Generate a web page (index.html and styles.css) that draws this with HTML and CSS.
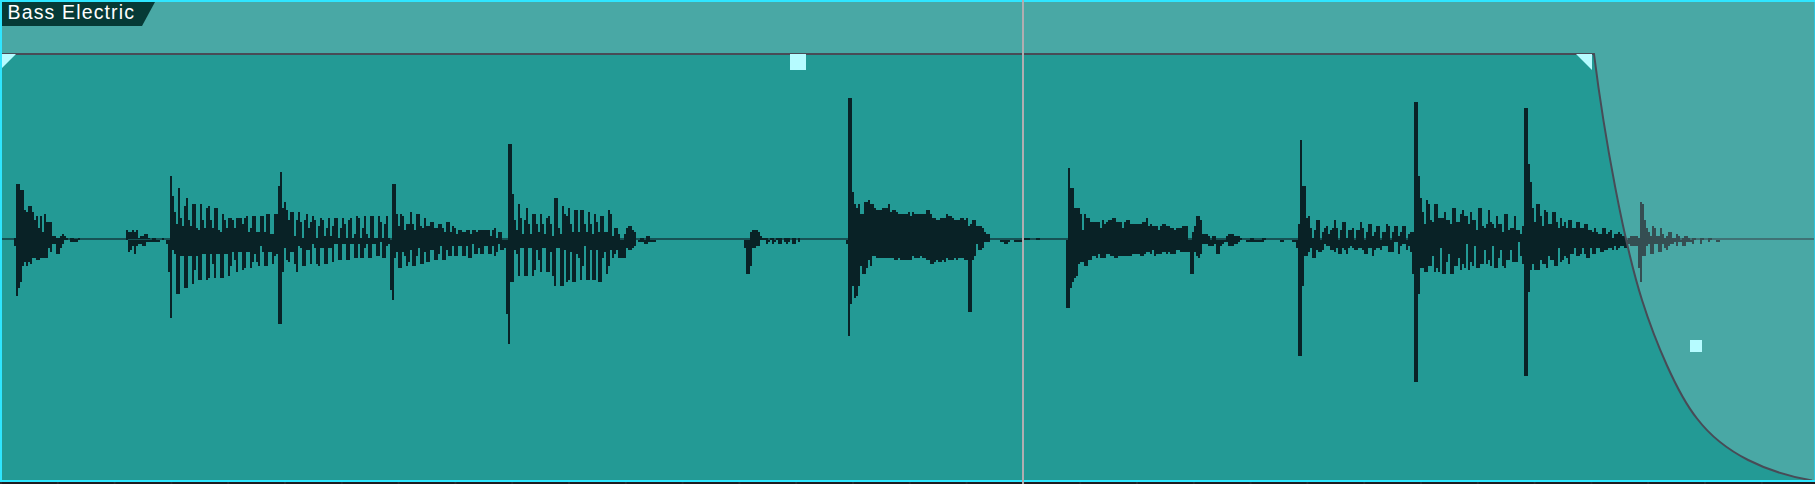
FILE: index.html
```html
<!DOCTYPE html>
<html lang="en">
<head>
<meta charset="utf-8">
<title>Bass Electric</title>
<link rel="stylesheet" href="styles.css">
</head>
<body>
<main class="track">
<section class="clip">
<svg class="clip-canvas" viewBox="0 0 1815 484" width="1815" height="484" aria-label="Waveform">
  <rect class="body" width="1815" height="484"/>
  <rect class="zero" x="2" y="238" width="1812" height="2"/>
  <g class="wave">
    <g transform="translate(0 160) scale(.333333)">
      <path d="M48 237V72H60V90H72V150H78V156H84V138H96V156H102V180H108V168H114V204H120V168H126V216H132V162H138V186H156V228H168V234H180V228H186V222H192V228H198V234H204V237ZM210 237V234H222V237ZM234 240V234H240V240Z"/>
      <path d="M42 234V258H48V408H54V384H60V366H66V318H72V306H78V318H84V306H90V312H96V294H108V300H120V294H144V264H150V276H156V252H168V282H180V264H186V252H192V240H204V234ZM210 237V246H234V237Z"/>
      <path d="M378 240V210H384V216H396V210H402V216H408V210H414V234H420V228H432V222H444V234H450V240ZM456 240V234H468V240ZM486 240V234H492V240ZM384 237V276H390V270H396V258H402V282H408V258H414V252H426V258H438V246H480V240H450V237Z"/>
      <path d="M510 237V48H516V108H522V156H528V192H534V84H540V174H546V198H552V138H558V114H564V180H570V198H576V132H588V204H594V210H600V132H606V180H612V204H618V144H624V138H630V180H636V204H642V144H654V210H660V216H666V162H672V180H678V204H684V174H696V180H702V204H708V174H726V192H732V174H738V168H744V216H750V237Z"/>
      <path d="M498 240V252H504V336H510V474H516V270H522V282H528V402H540V288H552V384H564V288H576V372H582V330H588V288H594V360H606V282H618V360H624V354H630V282H636V312H642V354H648V282H660V354H672V282H684V348H690V318H696V276H702V300H708V336H714V276H726V330H732V324H738V276H750V234H510V240Z"/>
    </g>
    <g transform="translate(250 160) scale(.333333)">
      <path d="M0 240V204H6V168H18V216H30V168H42V216H48V162H60V222H72V162H84V78H90V36H96V144H102V126H108V150H114V180H120V156H132V228H138V180H144V156H150V186H156V234H162V180H168V162H174V204H180V186H186V168H192V180H198V234H204V198H210V174H216V180H222V228H228V204H234V174H240V228H246V198H252V174H264V234H270V204H276V174H282V192H288V234H294V180H300V174H306V234H312V222H318V168H324V174H330V234H336V204H342V168H348V222H354V234H360V168H372V234H384V168H390V186H396V234H402V192H408V168H414V234H420V240H426V72H438V162H444V198H450V162H456V168H462V210H468V192H480V156H486V192H492V210H498V162H510V198H516V204H522V174H528V198H540V186H552V204H564V192H570V240Z"/>
      <path d="M0 240V324H6V306H12V282H18V306H24V318H30V258H36V276H42V318H54V276H66V312H72V288H78V282H84V492H96V336H102V264H108V300H114V306H120V276H132V312H138V336H144V258H150V264H156V318H168V270H180V312H186V252H192V264H198V312H204V318H210V264H222V312H234V264H246V306H252V252H264V300H276V252H288V300H300V252H312V294H324V252H330V294H342V264H348V252H354V294H366V252H378V288H390V246H396V294H408V258H414V252H420V390H426V420H432V294H438V276H444V324H456V276H462V288H468V318H474V306H480V270H486V318H498V288H504V264H510V312H522V276H528V306H540V270H552V300H564V282H570V240Z"/>
    </g>
    <g transform="translate(440 130) scale(.333333)">
      <path d="M0 330V282H6V294H12V306H18V276H30V306H36V288H42V294H48V312H54V300H66V306H78V300H90V312H96V300H108V306H114V300H150V318H156V300H162V294H168V324H174V306H186V330H204V42H216V192H222V270H228V300H234V222H240V264H246V312H252V270H258V234H264V282H270V312H276V252H288V282H294V306H300V252H306V282H312V312H318V264H324V258H330V282H336V318H342V204H354V294H360V312H366V228H372V252H378V258H384V234H390V282H396V306H402V240H414V306H420V240H432V282H438V306H444V246H450V282H456V312H462V252H468V276H474V306H480V258H492V306H504V240H510V252H516V318H522V294H534V312H540V330H552V312H558V294H564V288H576V300H582V306H588V330ZM600 330V324H612V330ZM618 330V318H630V330Z"/>
      <path d="M0 330V348H6V390H18V360H24V378H36V348H42V378H54V348H66V378H78V348H84V384H96V342H102V372H114V354H120V372H132V348H144V372H156V348H162V378H168V366H174V342H180V360H192V354H198V552H204V642H210V456H222V360H228V372H234V438H240V354H252V438H264V354H276V438H282V420H288V360H294V390H300V426H306V354H318V426H330V366H336V438H342V468H348V354H360V468H372V360H378V456H384V450H390V366H396V456H408V372H414V384H420V450H426V408H432V348H438V450H450V360H456V450H468V360H474V456H486V384H492V366H498V432H504V408H510V360H516V384H522V372H528V360H534V384H558V354H564V360H576V354H582V348H588V330ZM594 330V336H612V342H624V336H648V330Z"/>
    </g>
    <g transform="translate(730 80) scale(.333333)">
      <path d="M60 480V456H66V450H84V456H90V468H96V474H114V480H120V474H132V480H138V474H156V480H162V474H180V480H186V474H198V480H204V474H210V486H204V480H198V492H186V480H180V486H174V492H168V486H162V480H156V492H144V480H138V486H132V492H126V480H120V486H114V492H108V480H90V498H78V504H66V558H60V582H48V504H42V480Z"/>
      <path d="M354 480V54H366V336H372V372H378V384H384V372H390V402H402V366H414V360H420V372H432V384H438V390H456V384H474V372H480V396H486V390H498V396H504V402H534V396H540V408H546V396H552V402H588V390H600V402H606V414H618V420H630V414H648V402H654V408H666V414H672V420H690V414H702V420H708V414H714V438H720V432H726V420H738V438H756V444H762V456H768V462H780V480Z"/>
      <path d="M348 480V492H354V768H360V672H366V618H372V654H378V648H384V618H390V558H396V582H408V564H414V540H420V558H426V528H438V534H492V540H504V534H510V540H546V528H552V534H570V528H576V534H588V540H600V552H612V546H618V540H624V546H636V540H642V546H648V534H654V540H672V534H678V540H684V534H702V540H714V696H726V540H732V528H738V492H744V510H756V504H762V486H780V480ZM810 480V486H822V492H834V486H840V480Z"/>
    </g>
    <g transform="translate(1010 150) scale(.333333)">
      <path d="M12 270V276H36V270ZM42 270V264H60V270ZM78 270V264H90V270ZM708 270V276H762V270H768V264H756V270H732V264H720V270ZM810 270V276H822V270Z"/>
      <path d="M174 270V54H180V114H192V174H210V192H216V240H222V192H228V204H240V216H270V234H276V210H282V222H288V216H294V210H306V204H318V216H336V234H342V216H348V210H360V222H396V216H408V204H414V228H420V222H426V228H444V240H450V228H456V222H468V228H480V234H492V240H498V234H516V228H534V270H546V246H552V228H558V198H570V210H576V252H594V258H600V270H606V258H618V270H648V258H654V252H672V258H690V264H696V270Z"/>
      <path d="M168 270V474H180V414H186V396H192V384H198V378H204V342H210V336H222V348H234V330H246V318H258V324H264V312H270V324H288V312H300V318H312V324H324V318H366V312H390V318H402V312H408V306H420V312H426V300H432V318H438V312H456V306H468V312H474V306H480V312H498V300H510V306H540V372H552V306H558V318H564V324H570V312H576V282H594V288H612V282H618V312H630V288H636V282H642V276H654V288H672V282H684V276H690V270Z"/>
    </g>
    <g transform="translate(1290 90) scale(.333333)">
      <path d="M24 450V402H30V150H36V288H48V384H54V378H60V414H66V444H72V420H78V390H90V450H96V426H102V414H108V408H114V432H120V420H126V414H132V390H138V414H144V450H150V420H156V396H168V444H174V420H186V414H192V450H198V420H210V396H216V414H222V450H228V426H234V402H246V438H252V426H258V408H270V450H276V426H288V402H294V408H300V450H306V426H312V408H324V438H330V426H336V408H348V450H354V432H360V426H372V36H384V258H390V324H396V366H402V402H408V330H414V342H420V390H426V396H432V342H444V384H462V366H468V390H480V402H486V354H498V396H510V372H516V360H522V378H534V402H540V366H546V390H558V420H564V354H576V408H582V414H588V402H594V360H600V396H606V402H612V414H618V378H624V402H636V426H642V372H654V420H660V414H672V378H678V420H690V432H696V408H702V54H714V450Z"/>
      <path d="M6 450V456H18V474H24V798H36V588H42V498H54V486H60V474H66V504H78V480H84V486H96V480H102V462H108V468H120V480H132V486H138V474H144V492H156V474H162V480H168V492H174V474H180V468H186V474H192V480H204V474H216V480H222V492H234V474H246V498H252V480H258V474H270V480H276V468H294V486H312V456H324V492H330V468H336V462H348V480H354V468H360V486H366V552H372V876H384V612H390V534H402V546H414V528H426V498H432V546H438V534H444V546H450V474H456V552H468V516H474V492H480V552H492V528H504V504H510V540H516V522H522V534H528V462H534V540H540V516H546V528H552V468H558V534H570V522H582V480H588V522H594V510H600V528H606V468H612V534H624V504H630V480H636V528H642V534H648V510H660V480H666V516H684V456H690V498H696V522H702V858H714V450Z"/>
    </g>
    <g transform="translate(1510 30) scale(.333333)">
      <path d="M54 630V402H60V456H66V534H72V576H78V522H90V558H96V588H102V540H108V546H114V582H126V546H138V576H144V594H150V564H156V588H162V576H168V594H174V570H186V594H198V576H210V594H222V582H234V600H246V606H252V594H258V606H264V612H276V594H288V612H294V606H300V600H306V624H312V612H324V606H330V612H336V618H348V630H354V624H360V618H384V624H390V516H396V522H402V570H408V594H414V606H420V618H426V588H432V594H438V618H450V594H456V612H462V624H468V618H474V606H486V624H498V612H504V618H510V630H516V624H522V618H534V624H540V630H546V624H558V630ZM570 630V624H582V630ZM594 630V624H606V630Z"/>
      <path d="M54 630V786H60V720H66V702H72V720H90V690H96V702H108V714H114V678H120V690H132V708H144V654H150V696H156V690H162V678H168V684H174V702H180V672H192V654H198V678H210V672H216V654H222V672H228V684H240V654H246V672H258V654H270V666H282V660H294V654H306V660H312V648H318V660H324V654H330V648H342V654H354V642H360V648H384V714H390V756H396V678H408V648H414V642H420V672H432V642H444V666H456V642H462V654H468V660H474V648H480V642H492V636H498V648H504V636H516V648H528V636H546V642H552V630ZM570 630V642H576V630ZM594 630V636H600V630ZM618 630V636H630V630Z"/>
    </g>
  </g>
  <path class="veil" d="M0 0H1815V484H1812V480.5C1768 473 1724 454 1697 418.5C1677 393.5 1655 341 1642 300C1624 243 1604.5 138 1594 54H0Z"/>
  <path class="envelope" d="M2 54H1594C1604.5 138 1624 243 1642 300C1655 341 1677 393.5 1697 418.5C1724 454 1768 473 1812 480.5"/>
  <path class="handle" d="M2 54H16L2 68ZM1576 54H1592V70ZM790 54H806V70H790ZM1690 340H1702V352H1690Z"/>
  <path class="edge" d="M0 0H1815V2H2V480H1815V482H0Z"/>
  <rect class="edge-right" x="1814" y="2" width="1" height="478"/>
  <rect class="gutter" y="482" width="1815" height="2"/>
  <path class="gutter-ticks" d="M0 483H1815"/>
  <rect class="playhead" x="1022" width="2" height="484"/>
</svg>
<header class="clip-name">Bass Electric</header>
</section>
</main>
</body>
</html>
```
FILE: styles.css
```css
body { margin: 0; background: #1e1c1f; overflow: hidden; }
.track { width: 1815px; height: 484px; }
.clip { position: relative; height: 484px; }
.clip-canvas { display: block; }
.body { fill: #239a95; }
.zero { fill: #165254; }
.wave { fill: #092226; shape-rendering: crispEdges; }
.veil { fill: rgb(187, 210, 217); fill-opacity: .25; }
.envelope { fill: none; stroke: #484b56; stroke-width: 2; }
.handle { fill: #b6fbff; }
.edge { fill: #2fe6ff; }
.edge-right { fill: #2cc3db; }
.gutter { fill: #1e1c1f; }
.gutter-ticks { stroke: #2b292c; stroke-width: 2; stroke-dasharray: 2 54.8; }
.playhead { fill: #b0adb0; }
.clip-name {
  position: absolute;
  left: 2px;
  top: 2px;
  box-sizing: border-box;
  width: 153px;
  height: 24px;
  padding-left: 5.5px;
  background: #063a36;
  clip-path: polygon(0 0, 100% 0, 140px 100%, 0 100%);
  color: #fff;
  font: 19.5px/21px "Liberation Sans", Arial, sans-serif;
  letter-spacing: 1.15px;
  white-space: nowrap;
}
```
